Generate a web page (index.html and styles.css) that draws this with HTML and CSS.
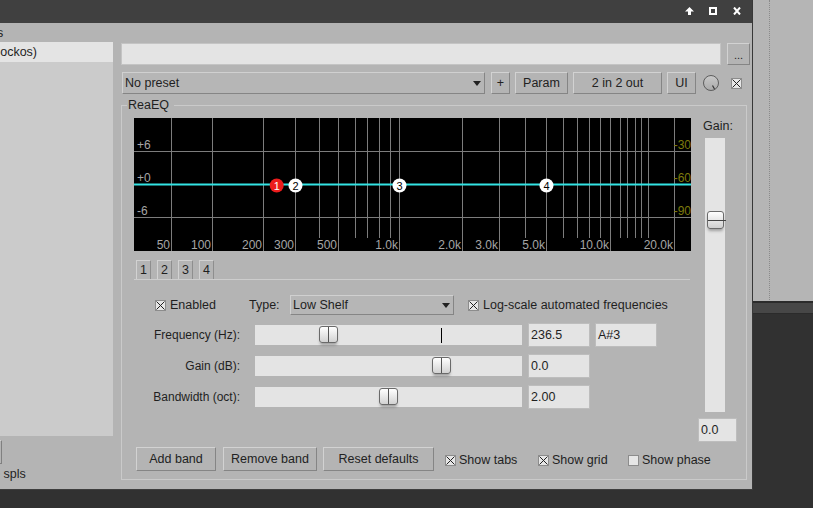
FILE: index.html
```html
<!DOCTYPE html>
<html>
<head>
<meta charset="utf-8">
<title>ReaEQ</title>
<link rel="stylesheet" href="styles.css">
</head>
<body>
<div class="screen">
  <div class="window">
    <div class="titlebar">
      <svg class="tb-icon ic-up" width="9" height="8" viewBox="0 0 9 8"><path d="M4.5 0L9 4.5H6V8H3V4.5H0Z" fill="#fff"/></svg>
      <svg class="tb-icon ic-max" width="8" height="8" viewBox="0 0 8 8"><rect x="1" y="1" width="6" height="6" fill="none" stroke="#fff" stroke-width="2"/></svg>
      <svg class="tb-icon ic-close" width="8" height="8" viewBox="0 0 8 8"><path d="M1 0.5L7 7.5M7 0.5L1 7.5" stroke="#fff" stroke-width="2"/></svg>
    </div>
    <div class="wbody">
      <div class="leftcol">
        <div class="lc-label"><span class="cut-s">s</span></div>
        <div class="fxlist">
          <div class="fxitem"><span class="cut-item">(Cockos)</span></div>
        </div>
        <div class="lc-btn"></div>
        <div class="lc-spls"><span class="cut-spls">0 spls</span></div>
      </div>
      <div class="maincol">
        <div class="row1">
          <div class="textbox"></div>
          <div class="btn dots">...</div>
        </div>
        <div class="row2">
          <div class="combo preset"><span>No preset</span><span class="arrow"></span></div>
          <div class="btn plus">+</div>
          <div class="btn param">Param</div>
          <div class="btn io">2 in 2 out</div>
          <div class="btn ui">UI</div>
          <svg class="knob" width="18" height="18" viewBox="0 0 18 18">
            <defs><linearGradient id="kg" x1="0" y1="0" x2="0" y2="1"><stop offset="0" stop-color="#c9c9c9"/><stop offset="1" stop-color="#a9a9a9"/></linearGradient></defs>
            <circle cx="9" cy="9.5" r="7.5" fill="#8f8f8f" opacity="0.5"/>
            <circle cx="9" cy="9" r="7.5" fill="url(#kg)" stroke="#5e5e5e" stroke-width="1"/>
            <path d="M10.5 11.5L12.5 15" stroke="#333" stroke-width="1.2"/>
          </svg>
          <span class="cb bypass"><svg width="9" height="9" viewBox="0 0 9 9"><path d="M0.5 0.5L8.5 8.5M8.5 0.5L0.5 8.5" stroke="#222" stroke-width="1"/></svg></span>
        </div>
        <fieldset class="frame">
          <legend>ReaEQ</legend>
          <div class="frame-inner">
            <div class="upper">
              <div class="eqcol">
                <svg class="graph" width="557" height="133" viewBox="0 0 557 133">
                  <rect width="557" height="133" fill="#000"/>
                  <g stroke="#7c7c7c" stroke-width="1" fill="none">
                    <path d="M0 33.5H557M0 99.5H557"/>
                    <path d="M37.5 0V133M78.5 0V133M129.5 0V133M161.5 0V133M204.5 0V133M265.5 0V133M328.5 0V133M365.5 0V133M412.5 0V133M476.5 0V133M540.5 0V133"/>
                    <path d="M185.5 0V120M221.5 0V120M233.5 0V120M245.5 0V120M256.5 0V120M391.5 0V120M429.5 0V120M443.5 0V120M455.5 0V120M466.5 0V120M486.5 0V120M493.5 0V120M501.5 0V120M507.5 0V120M514.5 0V120"/>
                  </g>
                  <path d="M0 66.5H557" stroke="#33e4e4" stroke-width="2"/>
                  <g class="glabel" fill="#a6a6a6">
                    <text x="3" y="30.5">+6</text>
                    <text x="3" y="64">+0</text>
                    <text x="3" y="97">-6</text>
                  </g>
                  <g class="glabel" fill="#a6a6a6" text-anchor="end">
                    <text x="36" y="131">50</text>
                    <text x="77" y="131">100</text>
                    <text x="128" y="131">200</text>
                    <text x="160" y="131">300</text>
                    <text x="203" y="131">500</text>
                    <text x="264" y="131">1.0k</text>
                    <text x="327" y="131">2.0k</text>
                    <text x="364" y="131">3.0k</text>
                    <text x="411" y="131">5.0k</text>
                    <text x="475" y="131">10.0k</text>
                    <text x="539" y="131">20.0k</text>
                  </g>
                  <g class="glabel" fill="#7d7a0c" text-anchor="end">
                    <text x="557" y="30.5">-30</text>
                    <text x="557" y="64">-60</text>
                    <text x="557" y="97">-90</text>
                  </g>
                  <g class="node" text-anchor="middle">
                    <circle cx="142.7" cy="67.5" r="7" fill="#ec1c1c"/>
                    <text x="142.7" y="71.5" fill="#fff">1</text>
                    <circle cx="161.5" cy="67.5" r="7" fill="#fff"/>
                    <text x="161.5" y="71.5" fill="#000">2</text>
                    <circle cx="265.5" cy="67.5" r="7" fill="#fff"/>
                    <text x="265.5" y="71.5" fill="#000">3</text>
                    <circle cx="412.5" cy="67.5" r="7" fill="#fff"/>
                    <text x="412.5" y="71.5" fill="#000">4</text>
                  </g>
                </svg>
                <div class="tabs">
                  <div class="tab active">1</div>
                  <div class="tab">2</div>
                  <div class="tab">3</div>
                  <div class="tab">4</div>
                </div>
                <div class="controls">
                  <div class="enabled-row">
                    <div class="en-group">
                      <span class="cb"><svg width="9" height="9" viewBox="0 0 9 9"><path d="M0.5 0.5L8.5 8.5M8.5 0.5L0.5 8.5" stroke="#222" stroke-width="1"/></svg></span>
                      <span>Enabled</span>
                    </div>
                    <div class="type-label">Type:</div>
                    <div class="combo shelf"><span>Low Shelf</span><span class="arrow"></span></div>
                    <div class="log">
                      <span class="cb"><svg width="9" height="9" viewBox="0 0 9 9"><path d="M0.5 0.5L8.5 8.5M8.5 0.5L0.5 8.5" stroke="#222" stroke-width="1"/></svg></span>
                      <span>Log-scale automated frequencies</span>
                    </div>
                  </div>
                  <div class="param-row first">
                    <div class="plabel">Frequency (Hz):</div>
                    <div class="track"><div class="tick"></div><div class="thumb t-freq"></div></div>
                    <div class="vbox">236.5</div>
                    <div class="vbox note">A#3</div>
                  </div>
                  <div class="param-row">
                    <div class="plabel">Gain (dB):</div>
                    <div class="track"><div class="thumb t-gain"></div></div>
                    <div class="vbox">0.0</div>
                  </div>
                  <div class="param-row">
                    <div class="plabel">Bandwidth (oct):</div>
                    <div class="track"><div class="thumb t-bw"></div></div>
                    <div class="vbox">2.00</div>
                  </div>
                </div>
              </div>
              <div class="gaincol">
                <div class="gain-label">Gain:</div>
                <div class="vtrack"><div class="vthumb"></div></div>
                <div class="vbox gvbox">0.0</div>
              </div>
            </div>
            <div class="bottom-row">
              <div class="btn b-add">Add band</div>
              <div class="btn b-remove">Remove band</div>
              <div class="btn b-reset">Reset defaults</div>
              <div class="check c-tabs">
                <span class="cb"><svg width="9" height="9" viewBox="0 0 9 9"><path d="M0.5 0.5L8.5 8.5M8.5 0.5L0.5 8.5" stroke="#222" stroke-width="1"/></svg></span>
                <span>Show tabs</span>
              </div>
              <div class="check c-grid">
                <span class="cb"><svg width="9" height="9" viewBox="0 0 9 9"><path d="M0.5 0.5L8.5 8.5M8.5 0.5L0.5 8.5" stroke="#222" stroke-width="1"/></svg></span>
                <span>Show grid</span>
              </div>
              <div class="check c-phase">
                <span class="cb"></span>
                <span>Show phase</span>
              </div>
            </div>
          </div>
        </fieldset>
      </div>
    </div>
  </div>
  <div class="side">
    <div class="side-top"><div class="dotline"></div></div>
    <div class="side-band"></div>
  </div>
</div>
</body>
</html>
```

FILE: styles.css
```css
* { box-sizing: border-box; }
html, body { margin: 0; padding: 0; }
body {
  width: 813px;
  height: 508px;
  overflow: hidden;
  background: #313131;
  font: 12.5px/16px "Liberation Sans", Arial, sans-serif;
  color: #1f1f1f;
}
.screen { display: flex; height: 508px; }

.window {
  width: 753px;
  height: 490px;
  display: flex;
  flex-direction: column;
  background: #b4b4b4;
  border-right: 1px solid #383838;
  border-bottom: 1px solid #3e3e3e;
}
.titlebar {
  height: 23px;
  flex: none;
  background: #404040;
  display: flex;
  justify-content: flex-end;
  align-items: flex-start;
  padding: 7px 11px 0 0;
}
.tb-icon { display: block; }
.ic-max { margin-left: 15px; }
.ic-close { margin-left: 16px; }

.wbody { flex: 1; display: flex; min-height: 0; }

.leftcol {
  width: 113px;
  margin-right: 8px;
  display: flex;
  flex-direction: column;
  padding-top: 2px;
  flex: none;
}
.lc-label { height: 16px; white-space: nowrap; overflow: hidden; }
.cut-s { margin-left: -3px; }
.fxlist { margin-top: 1px; height: 394px; background: #cbcbcb; }
.fxitem {
  height: 20px;
  line-height: 20px;
  background: #e4e4e4;
  white-space: nowrap;
  overflow: hidden;
}
.cut-item { margin-left: -13px; }
.lc-btn {
  margin-top: 4px;
  height: 24px;
  width: 62px;
  margin-left: -60px;
  border: 1px solid;
  border-color: #cfcfcf #808080 #808080 #cfcfcf;
}
.lc-spls { margin-top: 2px; white-space: nowrap; overflow: hidden; }
.cut-spls { margin-left: -7px; }

.maincol {
  width: 630px;
  display: flex;
  flex-direction: column;
  padding-top: 20px;
}
.row1 { display: flex; gap: 6px; height: 22px; }
.textbox { width: 600px; background: #e4e4e4; border: 1px solid #c4c4c4; }

.btn {
  display: flex;
  align-items: center;
  justify-content: center;
  background: #b4b4b4;
  border: 1px solid;
  border-color: #d2d2d2 #858585 #858585 #d2d2d2;
  white-space: nowrap;
  color: #222;
}
.dots { width: 23px; align-items: flex-end; padding-bottom: 3px; font-size: 11px; line-height: 11px; }

.row2 {
  display: flex;
  align-items: center;
  margin-top: 7px;
  height: 22px;
  padding-left: 1px;
}
.row2 .btn { height: 22px; }
.combo {
  display: flex;
  align-items: center;
  background: #b6b6b6;
  border: 1px solid;
  border-color: #d0d0d0 #858585 #858585 #d0d0d0;
  padding-left: 2px;
  white-space: nowrap;
}
.arrow {
  margin-left: auto;
  margin-right: 3px;
  width: 0;
  height: 0;
  border-left: 4px solid transparent;
  border-right: 4px solid transparent;
  border-top: 5px solid #222;
}
.preset { width: 363px; height: 22px; }
.plus { width: 19px; margin-left: 6px; }
.param { width: 53px; margin-left: 5px; }
.io { width: 89px; margin-left: 5px; }
.ui { width: 29px; margin-left: 5px; }
.knob { display: block; margin-left: 6px; }
.bypass { margin-left: 11px; }

.cb {
  width: 11px;
  height: 11px;
  flex: none;
  display: flex;
  align-items: center;
  justify-content: center;
  border: 1px solid #8c8c8c;
  background: #e6e6e6;
}
.cb svg { display: block; }

.frame {
  margin: 3px 0 0 0;
  padding: 5px 9px 8px 12px;
  border: 1px solid #cacaca;
  width: 626px;
  min-width: 0;
}
.frame legend {
  padding: 0 5px 0 1px;
  margin-left: -7px;
  line-height: 16px;
}
.frame-inner { display: flex; flex-direction: column; }
.upper { display: flex; gap: 7px; height: 324px; }
.eqcol { width: 557px; display: flex; flex-direction: column; }
.graph { display: block; }
.glabel { font-family: "Liberation Sans", Arial, sans-serif; font-size: 12px; }
.node { font-family: "Liberation Sans", Arial, sans-serif; font-size: 11px; }

.tabs {
  margin-top: 9px;
  height: 20px;
  width: 556px;
  display: flex;
  align-items: flex-end;
  gap: 6px;
  padding-left: 2px;
  border-bottom: 1px solid #cdcdcd;
}
.tab {
  width: 15px;
  height: 19px;
  border: 1px solid;
  border-bottom: 0;
  border-color: #d2d2d2 #8e8e8e transparent #d2d2d2;
  text-align: center;
  line-height: 18px;
}

.controls { margin-top: 15px; display: flex; flex-direction: column; }
.enabled-row { height: 20px; display: flex; align-items: center; padding-left: 21px; }
.en-group { width: 94px; display: flex; align-items: center; gap: 4px; }
.type-label { width: 41px; }
.shelf { width: 164px; height: 20px; }
.log { margin-left: 14px; display: flex; align-items: center; gap: 4px; white-space: nowrap; }

.param-row { display: flex; align-items: center; height: 24px; margin-top: 7px; }
.param-row.first { margin-top: 8px; }
.plabel { width: 106px; text-align: right; white-space: nowrap; font-size: 12px; }
.track {
  margin-left: 15px;
  width: 267px;
  height: 20px;
  background: #e4e4e4;
  position: relative;
}
.tick { position: absolute; left: 186px; top: 3px; width: 1px; height: 15px; background: #000; }
.thumb {
  position: absolute;
  top: 1px;
  width: 19px;
  height: 17px;
  border: 1px solid #6a6a6a;
  border-radius: 3px;
  background: linear-gradient(#ffffff, #d2d2d2);
  box-shadow: 0 3px 3px -1px rgba(0, 0, 0, 0.3);
}
.thumb::after {
  content: "";
  position: absolute;
  left: 8px;
  top: 0;
  bottom: 0;
  width: 1px;
  background: #555;
}
.t-freq { left: 64px; }
.t-gain { left: 177px; }
.t-bw { left: 124px; }

.vbox {
  margin-left: 6px;
  width: 62px;
  height: 24px;
  background: #e4e4e4;
  border: 1px solid #bdbdbd;
  padding-left: 2px;
  display: flex;
  align-items: center;
}
.vbox.note { margin-left: 5px; }

.gaincol { width: 39px; display: flex; flex-direction: column; }
.gain-label { margin-left: 5px; height: 16px; }
.vtrack {
  margin-top: 4px;
  margin-left: 7px;
  width: 20px;
  height: 274px;
  background: #e4e4e4;
  position: relative;
}
.vthumb {
  position: absolute;
  left: 2px;
  top: 73px;
  width: 17px;
  height: 18px;
  border: 1px solid #6a6a6a;
  border-radius: 3px;
  background: linear-gradient(#ffffff, #cfcfcf);
  box-shadow: 0 3px 3px -1px rgba(0, 0, 0, 0.3);
}
.vthumb::after {
  content: "";
  position: absolute;
  left: 0;
  right: -3px;
  top: 8px;
  height: 1px;
  background: #444;
}
.gvbox { margin-left: 0; margin-top: 6px; width: 39px; }

.bottom-row {
  margin-top: 5px;
  height: 24px;
  display: flex;
  align-items: center;
  padding-left: 2px;
}
.bottom-row .btn { height: 24px; }
.b-add { width: 80px; }
.b-remove { width: 94px; margin-left: 7px; }
.b-reset { width: 111px; margin-left: 6px; }
.check { display: flex; align-items: center; gap: 3px; padding-top: 2px; white-space: nowrap; }
.c-tabs { margin-left: 11px; width: 93px; }
.c-grid { width: 90px; }

.side { flex: 1; display: flex; flex-direction: column; }
.side-top { height: 301px; background: #b5b5b5; padding-left: 16px; }
.dotline { height: 300px; border-left: 1px dotted #8a8a8a; }
.side-band {
  height: 13px;
  background: #474747;
  border-top: 2px solid #2b2b2b;
  border-bottom: 1px solid #2b2b2b;
}
```
